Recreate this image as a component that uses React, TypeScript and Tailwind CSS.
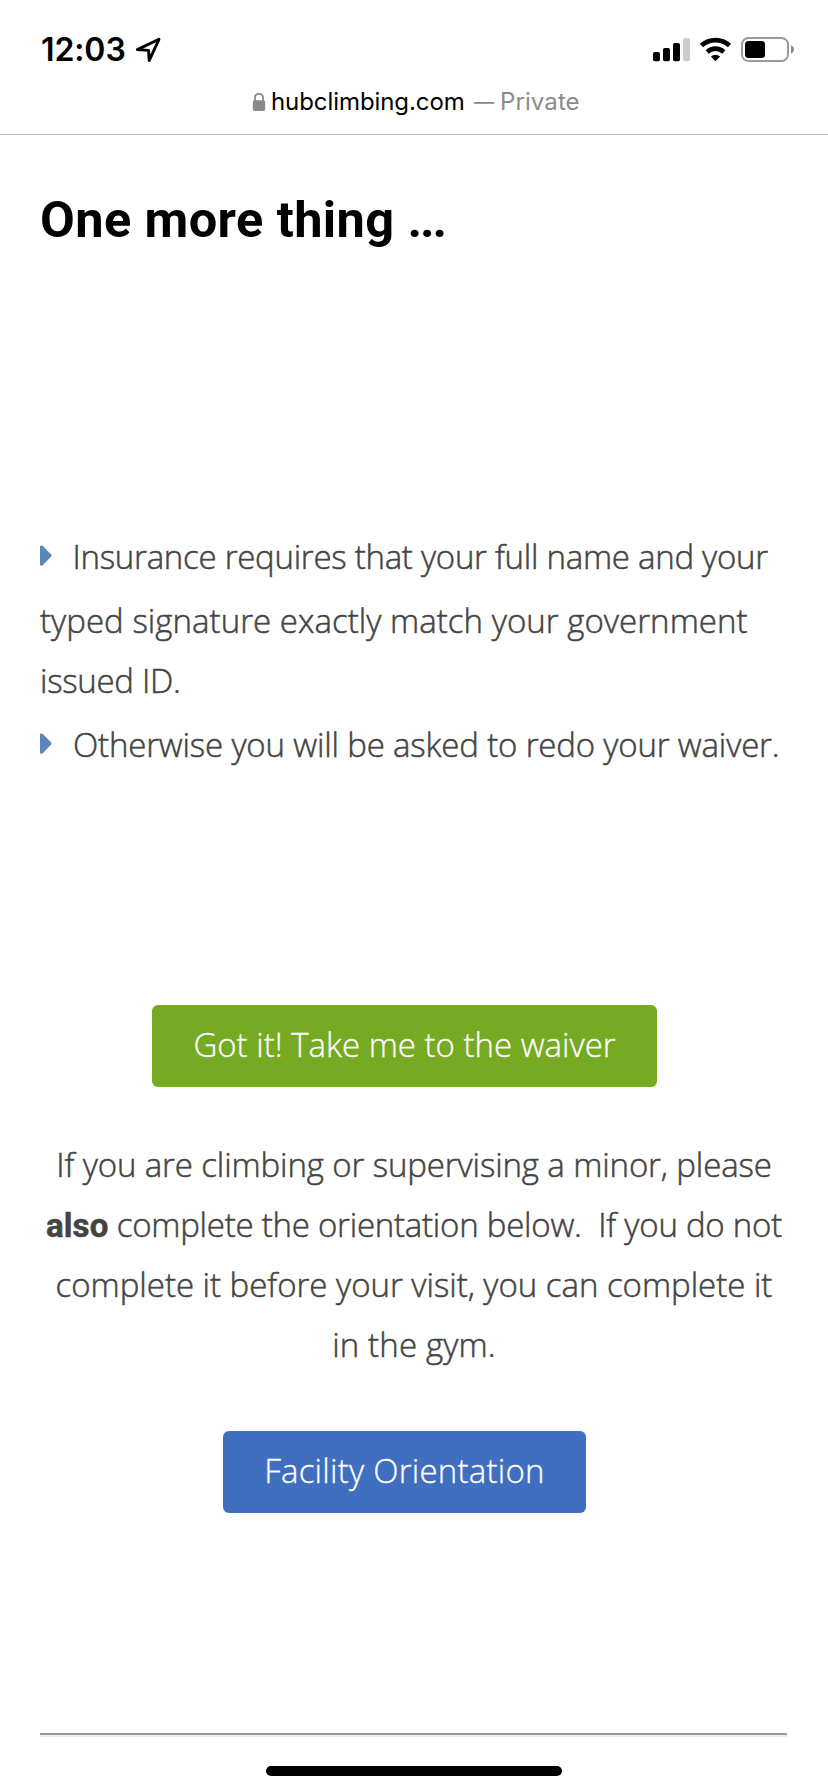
import type { ReactNode } from "react";

function LocationArrow() {
  return (
    <svg className="ml-[7px] h-[38px] w-[30px]" viewBox="132 30 30 38" fill="none" aria-hidden="true">
      <path d="M159 39.3 L137.3 49.6 L148.6 50.4 L149.2 60.6 Z" stroke="#000" strokeWidth="2.9" strokeLinejoin="round" />
    </svg>
  );
}

function StatusIcons() {
  return (
    <svg className="ml-auto h-[38px] w-[148px]" viewBox="650 30 148 38" aria-hidden="true">
      <rect x="653" y="52" width="7" height="9.2" rx="1.8" />
      <rect x="663" y="48" width="7" height="13.2" rx="1.8" />
      <rect x="673" y="43" width="7" height="18.2" rx="1.8" />
      <rect x="683" y="38" width="7" height="23.2" rx="1.8" fill="#cccccc" />
      <path d="M701.4 45.6 A20.8 20.8 0 0 1 729.6 45.6" fill="none" stroke="#000" strokeWidth="4.7" />
      <path d="M707.2 51.9 A12.4 12.4 0 0 1 723.8 51.9" fill="none" stroke="#000" strokeWidth="4.7" />
      <path d="M710.9 56.4 A7 7 0 0 1 720.1 56.4 L715.5 61.2 Z" />
      <rect x="742" y="38" width="46" height="23" rx="6.5" fill="none" stroke="#9a9a9a" strokeWidth="2" />
      <rect x="745" y="41" width="20" height="17" rx="3.5" />
      <path d="M791 45.3 C795 46.6 795 52.2 791 53.5 Z" fill="#8e8e8e" />
    </svg>
  );
}

function Lock() {
  return (
    <svg className="h-[30px] w-[14px]" viewBox="252 86 14 30" fill="none" aria-hidden="true">
      <rect x="252.8" y="100.3" width="12.4" height="10.7" rx="1.8" fill="#8a8a8d" />
      <path d="M255 101 V97.6 C255 92.5 263 92.5 263 97.6 V101" stroke="#8a8a8d" strokeWidth="1.8" />
    </svg>
  );
}

function Bullet() {
  return (
    <svg className="mb-[2px] h-[22px] w-[13px] shrink-0" viewBox="0 0 13 22" aria-hidden="true">
      <path d="M0 1 Q1.6 0 3 1.3 L11.2 9.6 Q12 10.5 11.2 11.4 L3 19.9 Q1.6 21.2 0 20.2 Z" fill="#5a86bb" />
    </svg>
  );
}

function Line({ className, children }: { className: string; children: ReactNode }) {
  return <span className={`block h-[60px] whitespace-pre ${className}`}>{children}</span>;
}

export default function App() {
  return (
    <div className="flex h-[1792px] w-[828px] flex-col overflow-hidden bg-white font-['Open_Sans',sans-serif]">
      <header className="flex h-[135px] shrink-0 flex-col border-b border-[#c4c4c6] pt-[30px] font-['Inter',sans-serif]">
        <div className="flex h-[38px] items-center pr-[30px] pl-[41px]">
          <span className="mt-[2px] w-[84px] text-[32px] leading-[38px] font-semibold tracking-[-0.1px] whitespace-nowrap text-black">12:03</span>
          <LocationArrow />
          <StatusIcons />
        </div>
        <div className="mt-[18px] flex h-[30px] pl-[252px] text-[24px] leading-[32px] whitespace-nowrap">
          <Lock />
          <span className="ml-[5px] w-[203px] tracking-[-0.08px] text-black">hubclimbing.com</span>
          <span className="w-[26px] text-[20px] text-[#8a8a8d]">—</span>
          <span className="tracking-[0.1px] text-[#8a8a8d]">Private</span>
        </div>
      </header>

      <main className="flex flex-col px-10 text-[33px] leading-[60px] font-light text-[#444444]">
        <h1 className="mt-[55px] font-['Roboto',sans-serif] text-[50.5px] leading-[60px] font-bold tracking-[0.4px] whitespace-nowrap text-black">
          One more thing <span className="tracking-[-2.2px]">...</span>
        </h1>

        <ul className="mt-[273px] [-webkit-text-stroke:0.5px_#444444]">
          <li>
            <div className="flex h-[68px] items-center">
              <Bullet />
              <Line className="ml-[19.5px] tracking-[-0.27px]">Insurance requires that your full name and your</Line>
            </div>
            <Line className="tracking-[0.04px]">typed signature exactly match your government</Line>
            <Line className="tracking-[-0.29px]">issued ID.</Line>
          </li>
          <li className="flex h-[68px] items-center">
            <Bullet />
            <Line className="ml-[20px] tracking-[-0.17px]">Otherwise you will be asked to redo your waiver.</Line>
          </li>
        </ul>

        <button className="mt-[226px] ml-[112px] h-[82px] w-[505px] rounded-[6px] bg-[#75aa22] pb-[2px] whitespace-nowrap text-white [-webkit-text-stroke:0.3px_#ffffff]">
          Got it! Take me to the waiver
        </button>

        <p className="mt-[48px] text-center [-webkit-text-stroke:0.5px_#444444]">
          <Line className="tracking-[-0.12px]">If you are climbing or supervising a minor, please</Line>
          <Line className="-mx-2 tracking-[-0.24px]">
            <strong className="font-['Roboto',sans-serif] font-bold tracking-[0.1px]">also</strong>
            {" complete the orientation below.\u00a0 If you do not"}
          </Line>
          <Line className="tracking-[-0.02px]">complete it before your visit, you can complete it</Line>
          <Line className="tracking-[0.15px]">in the gym.</Line>
        </p>

        <button className="mt-[56px] ml-[183px] h-[82px] w-[363px] rounded-[6px] bg-[#3f6fbe] pb-[2px] tracking-[0.24px] whitespace-nowrap text-white [-webkit-text-stroke:0.3px_#ffffff]">
          Facility Orientation
        </button>

        <hr className="mt-[220px] h-[4px] w-[747px] border-0 border-t-2 border-b-2 border-t-[#999999] border-b-[#eeeeee]" />
      </main>

      <div className="mt-[29px] ml-[266px] h-[10px] w-[296px] shrink-0 rounded-full bg-black" />
    </div>
  );
}
